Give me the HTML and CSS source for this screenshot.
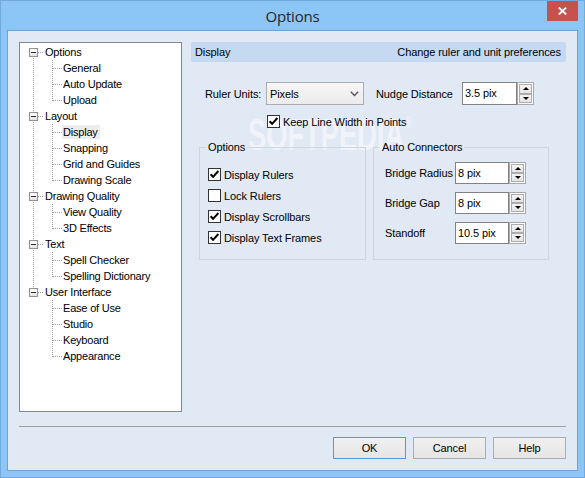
FILE: index.html
```html
<!DOCTYPE html>
<html>
<head>
<meta charset="utf-8">
<title>Options</title>
<link rel="stylesheet" href="styles.css">
</head>
<body>
<div class="window">
  <div class="titlebar">
    <div></div>
    <div class="title">Options</div>
    <div class="close"><svg width="9" height="8" viewBox="0 0 9 8"><path d="M0.8 0.5 L8.2 7.5 M8.2 0.5 L0.8 7.5" stroke="#fff" stroke-width="1.8"/></svg></div>
  </div>
  <div class="client">
    <div class="main">
      <div class="tree">
        <div class="node"><span class="g1 rb"><i class="exp"><b></b></i></span><span class="txt">Options</span></div>
        <div class="node"><span class="g1 cf"></span><span class="g2"></span><span class="txt">General</span></div>
        <div class="node"><span class="g1 cf"></span><span class="g2"></span><span class="txt">Auto Update</span></div>
        <div class="node"><span class="g1 cf"></span><span class="g2 last"></span><span class="txt">Upload</span></div>
        <div class="node"><span class="g1 rf"><i class="exp"><b></b></i></span><span class="txt">Layout</span></div>
        <div class="node"><span class="g1 cf"></span><span class="g2"></span><span class="txt sel">Display</span></div>
        <div class="node"><span class="g1 cf"></span><span class="g2"></span><span class="txt">Snapping</span></div>
        <div class="node"><span class="g1 cf"></span><span class="g2"></span><span class="txt">Grid and Guides</span></div>
        <div class="node"><span class="g1 cf"></span><span class="g2 last"></span><span class="txt">Drawing Scale</span></div>
        <div class="node"><span class="g1 rf"><i class="exp"><b></b></i></span><span class="txt">Drawing Quality</span></div>
        <div class="node"><span class="g1 cf"></span><span class="g2"></span><span class="txt">View Quality</span></div>
        <div class="node"><span class="g1 cf"></span><span class="g2 last"></span><span class="txt">3D Effects</span></div>
        <div class="node"><span class="g1 rf"><i class="exp"><b></b></i></span><span class="txt">Text</span></div>
        <div class="node"><span class="g1 cf"></span><span class="g2"></span><span class="txt">Spell Checker</span></div>
        <div class="node"><span class="g1 cf"></span><span class="g2 last"></span><span class="txt">Spelling Dictionary</span></div>
        <div class="node"><span class="g1 rt"><i class="exp"><b></b></i></span><span class="txt">User Interface</span></div>
        <div class="node"><span class="g1"></span><span class="g2"></span><span class="txt">Ease of Use</span></div>
        <div class="node"><span class="g1"></span><span class="g2"></span><span class="txt">Studio</span></div>
        <div class="node"><span class="g1"></span><span class="g2"></span><span class="txt">Keyboard</span></div>
        <div class="node"><span class="g1"></span><span class="g2 last"></span><span class="txt">Appearance</span></div>
      </div>
      <div class="panel">
        <span class="watermark">SOFTPEDIA<span class="reg">®</span></span>
        <div class="header"><span>Display</span><span>Change ruler and unit preferences</span></div>
        <div class="row1">
          <span class="ruler-lbl">Ruler Units:</span>
          <div class="select"><span>Pixels</span><svg width="9" height="6" viewBox="0 0 9 6"><path d="M0.8 0.8 L4.5 4.5 L8.2 0.8" fill="none" stroke="#5a5a5a" stroke-width="1.5"/></svg></div>
          <span class="nudge-lbl">Nudge Distance</span>
          <div class="spin tall">
            <div class="stext">3.5 pix</div>
            <div class="sbtns"><div class="sb"><i class="up"></i></div><div class="sb"><i class="dn"></i></div></div>
          </div>
        </div>
        <div class="cb keep"><span class="box"><svg width="11" height="11" viewBox="0 0 11 11"><polyline points="1.6,5.2 4.1,7.8 9.4,2" fill="none" stroke="#000" stroke-width="2"/></svg></span><span>Keep Line Width in Points</span></div>
        <div class="groups">
          <fieldset class="group g-opt">
            <legend>Options</legend>
            <div class="cblist">
              <div class="cb"><span class="box"><svg width="11" height="11" viewBox="0 0 11 11"><polyline points="1.6,5.2 4.1,7.8 9.4,2" fill="none" stroke="#000" stroke-width="2"/></svg></span><span>Display Rulers</span></div>
              <div class="cb"><span class="box"></span><span>Lock Rulers</span></div>
              <div class="cb"><span class="box"><svg width="11" height="11" viewBox="0 0 11 11"><polyline points="1.6,5.2 4.1,7.8 9.4,2" fill="none" stroke="#000" stroke-width="2"/></svg></span><span>Display Scrollbars</span></div>
              <div class="cb"><span class="box"><svg width="11" height="11" viewBox="0 0 11 11"><polyline points="1.6,5.2 4.1,7.8 9.4,2" fill="none" stroke="#000" stroke-width="2"/></svg></span><span>Display Text Frames</span></div>
            </div>
          </fieldset>
          <fieldset class="group g-auto">
            <legend>Auto Connectors</legend>
            <div class="arows">
              <div class="arow"><span class="alabel">Bridge Radius</span>
                <div class="spin"><div class="stext">8 pix</div><div class="sbtns"><div class="sb"><i class="up"></i></div><div class="sb"><i class="dn"></i></div></div></div>
              </div>
              <div class="arow"><span class="alabel">Bridge Gap</span>
                <div class="spin"><div class="stext">8 pix</div><div class="sbtns"><div class="sb"><i class="up"></i></div><div class="sb"><i class="dn"></i></div></div></div>
              </div>
              <div class="arow"><span class="alabel">Standoff</span>
                <div class="spin"><div class="stext">10.5 pix</div><div class="sbtns"><div class="sb"><i class="up"></i></div><div class="sb"><i class="dn"></i></div></div></div>
              </div>
            </div>
          </fieldset>
        </div>
      </div>
    </div>
    <div class="sep"></div>
    <div class="buttons">
      <div class="btn def">OK</div>
      <div class="btn">Cancel</div>
      <div class="btn">Help</div>
    </div>
  </div>
</div>
</body>
</html>
```
FILE: styles.css
```css
html, body {
  margin: 0;
  padding: 0;
}
body {
  font-family: "Liberation Sans", Arial, sans-serif;
  font-size: 11px;
  letter-spacing: -0.1px;
  color: #000;
  background: #8cc6f7;
}
.window {
  width: 585px;
  height: 478px;
  box-sizing: border-box;
  border: 1px solid #72a9df;
  background: #8cc6f7;
  padding: 0 6px 6px 6px;
  display: flex;
  flex-direction: column;
}
.titlebar {
  height: 29px;
  display: grid;
  grid-template-columns: 1fr auto 1fr;
  flex: none;
}
.title {
  font-family: "Open Sans", "Noto Sans", sans-serif;
  font-size: 15px;
  letter-spacing: -0.2px;
  color: #262626;
  align-self: center;
  line-height: 20px;
  margin-top: 1px;
}
.close {
  justify-self: end;
  align-self: start;
  width: 31px;
  height: 20px;
  background: #c75050;
  display: flex;
  align-items: center;
  justify-content: center;
}
.client {
  flex: 1;
  box-sizing: border-box;
  border: 1px solid #6ba3da;
  background: #e1e9f5;
  padding: 11px 11px 0 11px;
  display: flex;
  flex-direction: column;
}
.main {
  display: flex;
  gap: 9px;
  height: 370px;
}
/* tree */
.tree {
  --vd: repeating-linear-gradient(to bottom, #a0a0a0 0 1px, transparent 1px 2px);
  --hd: repeating-linear-gradient(to right, #a0a0a0 0 1px, transparent 1px 2px);
  width: 163px;
  box-sizing: border-box;
  border: 1px solid #828790;
  background: #fff;
  padding-top: 1px;
  letter-spacing: -0.2px;
}
.node {
  display: flex;
  align-items: center;
  height: 16px;
}
.g1 {
  width: 25px;
  height: 16px;
  flex: none;
  display: flex;
  align-items: flex-start;
}
.g1.rb { background: var(--hd) 18px 8px / 6px 1px no-repeat, var(--vd) 13px 8px / 1px 8px no-repeat; }
.g1.rf { background: var(--hd) 18px 8px / 6px 1px no-repeat, var(--vd) 13px 0 / 1px 16px no-repeat; }
.g1.rt { background: var(--hd) 18px 8px / 6px 1px no-repeat, var(--vd) 13px 0 / 1px 8px no-repeat; }
.g1.cf { background: var(--vd) 13px 0 / 1px 16px no-repeat; }
.g2 {
  width: 18px;
  height: 16px;
  flex: none;
  background: var(--hd) 8px 8px / 10px 1px no-repeat, var(--vd) 7px 0 / 1px 16px no-repeat;
}
.g2.last {
  background: var(--hd) 8px 8px / 10px 1px no-repeat, var(--vd) 7px 0 / 1px 9px no-repeat;
}
.exp {
  width: 9px;
  height: 9px;
  box-sizing: border-box;
  margin: 4px 0 0 9px;
  border: 1px solid #919191;
  background: linear-gradient(#ffffff, #e4e4e4);
  display: flex;
  align-items: center;
  justify-content: center;
}
.exp b {
  width: 5px;
  height: 1px;
  background: #2a2a2a;
}
.txt {
  line-height: 16px;
  white-space: nowrap;
}
.txt.sel {
  background: #ededed;
  line-height: 14px;
  padding: 0 2px 0 1px;
  margin-left: -1px;
}
/* panel */
.panel {
  flex: 1;
  position: relative;
  z-index: 0;
}
.watermark {
  position: absolute;
  left: 57px;
  top: 65px;
  z-index: -1;
  font-family: "Liberation Sans", Arial, sans-serif;
  font-weight: bold;
  font-size: 44px;
  line-height: 33px;
  height: 33px;
  letter-spacing: 0;
  color: rgba(255, 255, 255, 0.55);
  transform: scaleX(0.62);
  transform-origin: left top;
  white-space: nowrap;
}
.watermark .reg {
  font-size: 14px;
  vertical-align: 22px;
  margin-left: 2px;
}
.header {
  height: 20px;
  background: #c5d9f1;
  display: flex;
  justify-content: space-between;
  align-items: center;
  padding: 0 5px 0 4px;
}
.row1 {
  display: flex;
  align-items: center;
  height: 23px;
  margin-top: 20px;
  padding-left: 14px;
}
.ruler-lbl {
  width: 61px;
  flex: none;
}
.select {
  width: 98px;
  height: 23px;
  box-sizing: border-box;
  border: 1px solid #acacac;
  background: linear-gradient(#f6f6f6, #ececec);
  display: flex;
  align-items: center;
  justify-content: space-between;
  padding: 0 4px 0 3px;
  flex: none;
}
.nudge-lbl {
  width: 86px;
  margin-left: 12px;
  flex: none;
}
.spin {
  display: flex;
  height: 22px;
  flex: none;
}
.spin.tall {
  height: 23px;
}
.stext {
  width: 54px;
  box-sizing: border-box;
  border: 1px solid #828282;
  background: #fff;
  padding-left: 2px;
  display: flex;
  align-items: center;
  padding-bottom: 1px;
}
.spin.tall .stext {
  width: 55px;
}
.sbtns {
  width: 17px;
  box-sizing: border-box;
  border: 1px solid #a8a8a8;
  background: #fff;
  padding: 1px;
  display: flex;
  flex-direction: column;
}
.sb {
  flex: 1;
  border: 1px solid #acacac;
  background: linear-gradient(#f4f4f4, #e4e4e4);
  display: flex;
  align-items: center;
  justify-content: center;
}
.sb i {
  width: 0;
  height: 0;
  border-left: 3px solid transparent;
  border-right: 3px solid transparent;
}
.sb i.up { border-bottom: 3px solid #000; }
.sb i.dn { border-top: 3px solid #000; }
/* checkboxes */
.cb {
  display: flex;
  align-items: center;
  gap: 3px;
  height: 13px;
  white-space: nowrap;
}
.box {
  width: 13px;
  height: 13px;
  box-sizing: border-box;
  border: 1px solid #333;
  background: #fff;
  flex: none;
  display: flex;
}
.keep {
  margin-left: 76px;
  margin-top: 10px;
}
.groups {
  display: flex;
  gap: 7px;
  margin-left: 8px;
  margin-top: 13px;
}
.group {
  margin: 0;
  min-width: 0;
  box-sizing: border-box;
  border: 1px solid #cdd6e1;
  padding: 14px 6px 15px 6px;
}
.group legend {
  padding: 0 2px;
  line-height: 13px;
}
.g-opt { width: 167px; }
.g-auto { width: 176px; padding-top: 8px; }
.cblist {
  display: flex;
  flex-direction: column;
  gap: 8px;
  padding-left: 2px;
}
.arows {
  display: flex;
  flex-direction: column;
  gap: 8px;
  padding-left: 5px;
}
.arow {
  display: flex;
  align-items: center;
}
.alabel {
  width: 70px;
  flex: none;
  white-space: nowrap;
}
/* bottom */
.sep {
  height: 1px;
  background: #a0a0a0;
  margin-top: 14px;
}
.buttons {
  display: flex;
  justify-content: flex-end;
  gap: 7px;
  margin-top: 10px;
}
.btn {
  width: 73px;
  height: 22px;
  box-sizing: border-box;
  border: 1px solid #acacac;
  background: linear-gradient(#f0f0f0, #e5e5e5);
  display: flex;
  align-items: center;
  justify-content: center;
}
.btn.def {
  border-color: #4c9be8;
}
```
